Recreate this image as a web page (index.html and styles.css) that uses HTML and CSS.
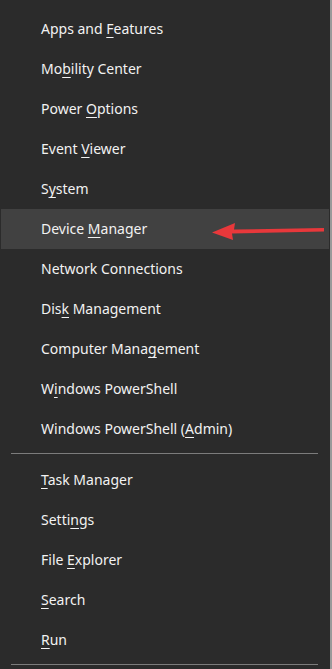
FILE: index.html
```html
<!DOCTYPE html>
<html lang="en">
<head>
    <meta charset="UTF-8">
    <meta name="viewport" content="width=device-width, initial-scale=1.0">
    <title>Quick Link Menu</title>
    <link rel="stylesheet" href="styles.css">
</head>
<body>

    <!-- Win+X menu -->
    <div class="menu">
        <ul class="menu-group">
            <li>Apps and <u>F</u>eatures</li>
            <li>Mo<u>b</u>ility Center</li>
            <li>Power <u>O</u>ptions</li>
            <li>Event <u>V</u>iewer</li>
            <li>S<u>y</u>stem</li>
            <li class="active">Device <u>M</u>anager</li>
            <li>Network Connections</li>
            <li>Dis<u>k</u> Management</li>
            <li>Computer Mana<u>g</u>ement</li>
            <li>W<u>i</u>ndows PowerShell</li>
            <li>Windows PowerShell (<u>A</u>dmin)</li>
        </ul>
        <div class="separator"></div>
        <ul class="menu-group">
            <li><u>T</u>ask Manager</li>
            <li>Setti<u>n</u>gs</li>
            <li>File <u>E</u>xplorer</li>
            <li><u>S</u>earch</li>
            <li><u>R</u>un</li>
        </ul>
        <div class="separator"></div>
    </div>

    <!-- Pointer arrow drawn over the menu -->
    <svg class="pointer" width="120" height="24" viewBox="0 0 120 24">
        <path d="M112 8 L22 9.5 L23 3 L0 12.5 L21 20 L20 13.5 L112 11.5 Z" fill="#e8383b"/>
    </svg>

</body>
</html>
```

FILE: styles.css
```css
/* General */
html, body {
    margin: 0;
    padding: 0;
    background: #2b2b2b;
}

body {
    position: relative;
    width: 332px;
    height: 669px;
    overflow: hidden;
    font-family: "Noto Sans", "Open Sans", sans-serif;
}

/* Menu */
.menu {
    box-sizing: border-box;
    width: 332px;
    height: 669px;
    padding: 9px 1px 0 1px;
    background: #2b2b2b;
    border-right: 2px solid #9a9a9a;
}

.menu-group {
    list-style: none;
    margin: 0;
    padding: 0;
}

.menu-group li {
    height: 40px;
    line-height: 40px;
    padding-left: 40px;
    font-size: 14px;
    color: #f2f2f2;
    white-space: nowrap;
}

.menu-group li u {
    text-decoration-thickness: 1px;
    text-underline-offset: 3px;
}

.menu-group li.active {
    background: #414141;
}

.separator {
    height: 1px;
    margin: 4px 11px 6px 10px;
    background: #7c7c7c;
}

/* Arrow */
.pointer {
    position: absolute;
    left: 212px;
    top: 220px;
}
```
